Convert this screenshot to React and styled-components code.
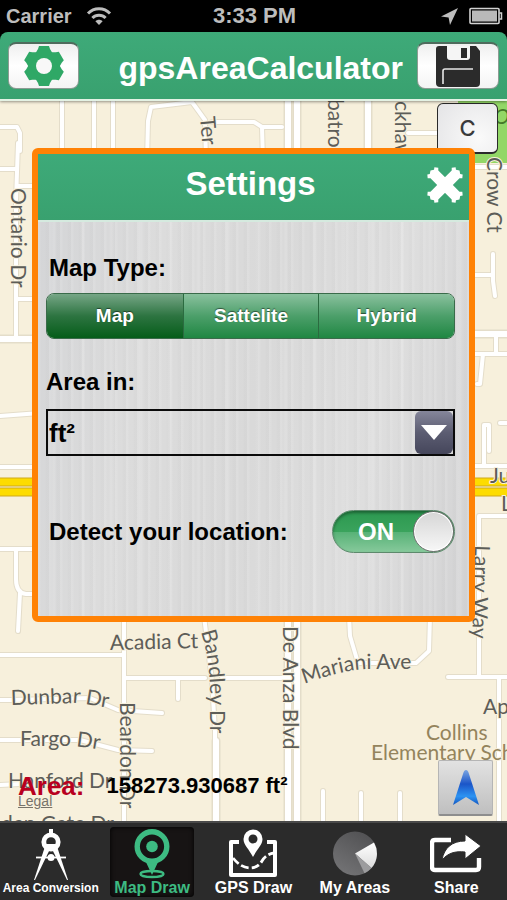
import React, {useState} from 'react';
import styled, {createGlobalStyle, css} from 'styled-components';

const GlobalStyle = createGlobalStyle`
  * {
    box-sizing: border-box;
  }

  body {
    margin: 0;
    background: #000;
    font-family: "Liberation Sans", Arial, sans-serif;
    font-weight: bold;
  }

  button, select, input {
    font: inherit;
  }
`;

/* ---------- icons ---------- */

const WifiIcon = () => (
  <svg width="26" height="20" viewBox="0 0 26 20" fill="none" stroke="#bdbdbd" strokeWidth="3">
    <path d="M2 7.5C8 1.2 18 1.2 24 7.5"/>
    <path d="M6.4 12C10 8.2 16 8.2 19.6 12"/>
    <path d="M9.4 15.2C11.4 13.2 14.6 13.2 16.6 15.2L13 19Z" fill="#bdbdbd" stroke="none"/>
  </svg>
);

const ArrowIcon = () => (
  <svg width="19" height="19" viewBox="0 0 19 19" fill="#bdbdbd">
    <path d="M18 1L10 18L8.6 10.4L1 9.4Z"/>
  </svg>
);

const BatteryIcon = () => (
  <svg width="34" height="18" viewBox="0 0 34 18">
    <rect x="1" y="1.5" width="29" height="15" rx="1" fill="none" stroke="#d2d2d2" strokeWidth="1.6"/>
    <rect x="3" y="3.5" width="25" height="11" fill="#b9b9b9"/>
    <path d="M30.5 6H32.5V12H30.5" fill="none" stroke="#d2d2d2" strokeWidth="1.5"/>
  </svg>
);

const GearIcon = () => (
  <svg width="42" height="42" viewBox="-21 -21 42 42">
    <g fill="#2fa866">
      <circle r="15.5"/>
      {[0, 60, 120, 180, 240, 300].map(a => (
        <path key={a} transform={`rotate(${a})`} d="M-9 -12L-6 -17L-5 -20H5L6 -17L9 -12Z"/>
      ))}
    </g>
    <circle r="8" fill="#f8f8f8"/>
  </svg>
);

const FloppyIcon = () => (
  <svg width="44" height="41" viewBox="0 0 44 41">
    <path d="M3 0H40L44 5V37Q44 41 40 41H4Q0 41 0 37V3Q0 0 3 0Z" fill="#2b2b2b"/>
    <path d="M11 0H34V11Q34 14 31 14H14Q11 14 11 11Z" fill="#f5f5f5"/>
    <rect x="25" y="2" width="6" height="10" fill="#2b2b2b"/>
    <path d="M7 38V25Q7 23 9 23H37" fill="none" stroke="#e6e6e6" strokeWidth="1.6"/>
  </svg>
);

const CloseIcon = () => (
  <svg width="36" height="36" viewBox="-18 -18 36 36" fill="#fff">
    {[45, 135, 225, 315].map(a => (
      <path key={a} transform={`rotate(${a})`} d="M-5.5 0V-15L-7.5 -17L-5 -20L-3 -18.500L0 -20.500L3 -18.500L5 -20L7.5 -17L5.5 -15V0Z"/>
    ))}
  </svg>
);

const LocateIcon = () => (
  <svg width="30" height="38" viewBox="0 0 30 38">
    <defs>
      <linearGradient id="locate" x1="0" y1="0" x2="0" y2="1">
        <stop offset="0" stopColor="#7aa5e2"/>
        <stop offset="0.4" stopColor="#1b55c8"/>
        <stop offset="0.75" stopColor="#2c93f2"/>
        <stop offset="1" stopColor="#1456c0"/>
      </linearGradient>
    </defs>
    <path d="M15 1Q17 1 18 5L28 36L15 28L2 36L12 5Q13 1 15 1Z" fill="url(#locate)"/>
  </svg>
);

const CompassIcon = () => (
  <svg width="36" height="52" viewBox="0 0 36 52">
    <rect x="16" y="1" width="4" height="6" fill="#fff"/>
    <circle cx="18" cy="14" r="7.2" fill="none" stroke="#fff" strokeWidth="4.8"/>
    <path d="M13 16H23L22 19H14Z" fill="#fff"/>
    <path d="M11.5 20L16.5 22L2 52H1Z" fill="#fff"/>
    <path d="M24.5 20L19.5 22L34 52H35Z" fill="#fff"/>
    <path d="M3 29.5H33" stroke="#fff" strokeWidth="1.8"/>
    <circle cx="18" cy="29.5" r="3.5" fill="#fff"/>
  </svg>
);

const PinIcon = () => (
  <svg width="38" height="50" viewBox="0 0 38 50">
    <ellipse cx="19" cy="45" rx="11.5" ry="3" fill="none" stroke="#3dbb82" strokeWidth="2.4"/>
    <path d="M12 31H26L19 46Z" fill="#3dbb82"/>
    <circle cx="19" cy="17.5" r="14.8" fill="#171414" stroke="#3dbb82" strokeWidth="5.4"/>
    <circle cx="19" cy="17.5" r="5.8" fill="#3dbb82"/>
  </svg>
);

const MapPinIcon = () => (
  <svg width="48" height="49" viewBox="0 0 48 49">
    <path d="M10 13H2V46H46V13H38" fill="none" stroke="#fff" strokeWidth="4" strokeLinejoin="round"/>
    <path d="M24 28C20 20 14.500 16 14.500 10A9.500 9.500 0 0 1 33.500 10C33.500 16 28 20 24 28Z" fill="#fff"/>
    <circle cx="24" cy="10" r="4.5" fill="#2b2b2b"/>
    <path d="M4 29Q12 39 21 39Q29 39 33 32Q37 25 45 24" fill="none" stroke="#fff" strokeWidth="2.8" strokeDasharray="8 3"/>
  </svg>
);

const PieIcon = () => (
  <svg width="44" height="45" viewBox="0 0 44 45">
    <defs>
      <linearGradient id="pie" x1="0.8" y1="0" x2="0.2" y2="1">
        <stop offset="0" stopColor="#505052"/>
        <stop offset="1" stopColor="#747476"/>
      </linearGradient>
      <linearGradient id="slice" x1="0" y1="0" x2="0" y2="1">
        <stop offset="0" stopColor="#fff"/>
        <stop offset="1" stopColor="#dcdcdc"/>
      </linearGradient>
    </defs>
    <circle cx="22" cy="22.5" r="22" fill="url(#pie)"/>
    <path d="M22 22.5L41 11.5A22 22 0 0 1 38.5 37Z" fill="url(#slice)"/>
    <path d="M22 22.5L38.5 37A22 22 0 0 1 31.5 42.3Z" fill="#9c9c9e"/>
  </svg>
);

const ShareIcon = () => (
  <svg width="52" height="40" viewBox="0 0 52 40">
    <path d="M21 6H5Q2 6 2 9V33Q2 36 5 36H46Q49 36 49 33V24" fill="none" stroke="#fff" strokeWidth="4.4"/>
    <path d="M12 26C14 14 22 7 35 7V0L51 12L35 25V18C25 17 18 19 12 26Z" fill="#fff" stroke="#2b2b2b" strokeWidth="1"/>
  </svg>
);

/* ---------- map ---------- */

const THIN_ROADS = [
  'M62 95V160', 'M94 95V160', 'M113 95V160',
  'M147 160L148 120L151 106L192 101L205 119L206 160', 'M212 121H254L262 126L263 160', 'M262 126H282',
  'M0 126H17L20 132V150', 'M18 142L16 200V338', 'M0 168H17', 'M17 185H40', 'M17 298H40',
  'M0 415L40 412', 'M0 466H40', 'M0 548H40', 'M16 548V578Q16 592 26 593H40', 'M20 592L18 630',
  'M408 132H440', 'M470 166H507', 'M470 274H493', 'M493 253V280L495 295', 'M496 333V352', 'M470 353H507',
  'M483 353L480 383H477', 'M484 465V424H489V450', 'M470 465H507', 'M500 422H507', 'M479 676V515H507',
  'M448 676H507', 'M499 676V830', 'M124 615V830', 'M0 654H124', 'M124 677H205', 'M178 677V698',
  'M204 615L212 680L215 730V830', 'M222 677H290', 'M349 615L350 635L358 662H416L429 650L430 615',
  'M0 699H12L90 697L118 709L162 712', 'M0 739H80L118 749L152 750', 'M0 784L20 783', 'M323 790V830', 'M361 792V830', 'M400 792V830',
];

const WIDE_ROADS = ['M288 95V830', 'M297 95V830', 'M368 95V160', 'M0 338H40', 'M470 333H507', 'M216 740V830'];

const LABELS = [
  {text: 'Ter', d: 'M200 116L205 176'},
  {text: 'batross', d: 'M328 98V200'},
  {text: 'ckhawk', d: 'M395 100V200'},
  {text: 'Crow Ct', d: 'M487 156V290'},
  {text: 'Ontario Dr', d: 'M11 187V330'},
  {text: 'Ju', d: 'M490 482H530'},
  {text: 'La', d: 'M501 510H540'},
  {text: 'Larry Way', d: 'M475 544L473 600L471 700'},
  {text: 'Acadia Ct', d: 'M110 649L250 646'},
  {text: 'Bandley Dr', d: 'M201 631Q209 655 210 690V790'},
  {text: 'De Anza Blvd', d: 'M283 625V790'},
  {text: 'Mariani Ave', d: 'M304 683Q345 668 370 668H450'},
  {text: 'Dunbar Dr', d: 'M11 704L76 702Q90 703 150 715'},
  {text: 'Fargo Dr', d: 'M20 745H70Q85 745 150 758'},
  {text: 'Hanford Dr', d: 'M8 787H170'},
  {text: 'Beardon Dr', d: 'M120 701V850'},
  {text: 'den Gate Dr', d: 'M1 830H160'},
  {text: 'Ap', d: 'M483 713H540'},
  {text: 'Collins', d: 'M426 739H540', color: '#94845c'},
  {text: 'Elementary School', d: 'M371 759H560', color: '#94845c'},
];

const MapView = () => (
  <MapCanvas viewBox="0 100 507 720" preserveAspectRatio="xMidYMid slice" aria-label="Map">
    <rect x="-500" y="-200" width="1500" height="1400" fill="#f7f0dc"/>
    <path d="M458 95H507V162H458Z" fill="#92d767"/>
    <g fill="none" strokeLinecap="round" strokeLinejoin="round">
      <g stroke="#e4ddca" strokeWidth="6">{THIN_ROADS.map(d => <path key={d} d={d}/>)}</g>
      <g stroke="#e4ddca" strokeWidth="9">{WIDE_ROADS.map(d => <path key={d} d={d}/>)}</g>
      <g stroke="#fff" strokeWidth="4">{THIN_ROADS.map(d => <path key={d} d={d}/>)}</g>
      <g stroke="#fff" strokeWidth="6">{WIDE_ROADS.map(d => <path key={d} d={d}/>)}</g>
    </g>
    <path d="M0 481H507M0 491H507" stroke="#cfa91b" strokeWidth="9"/>
    <path d="M0 481H507M0 491H507" stroke="#fddc00" strokeWidth="7"/>
    <GreenLabel x="494" y="123">Or</GreenLabel>
    {LABELS.map(({text, d, color = '#5d5d58'}, i) => (
      <React.Fragment key={text}>
        <path id={`street-${i}`} d={d} fill="none"/>
        <text fill={color}>
          <textPath href={`#street-${i}`}>{text}</textPath>
        </text>
      </React.Fragment>
    ))}
  </MapCanvas>
);

/* ---------- screen ---------- */

const MAP_TYPES = ['Map', 'Sattelite', 'Hybrid'];

const TABS = [
  {name: 'Area Conversion', Icon: CompassIcon, small: true},
  {name: 'Map Draw', Icon: PinIcon},
  {name: 'GPS Draw', Icon: MapPinIcon},
  {name: 'My Areas', Icon: PieIcon},
  {name: 'Share', Icon: ShareIcon},
];

const Settings = () => {
  const [mapType, setMapType] = useState('Map');
  const [detect, setDetect] = useState(true);

  return (
    <Dialog role="dialog" aria-labelledby="settings-title">
      <DialogHeader>
        <DialogTitle id="settings-title">Settings</DialogTitle>
        <CloseButton aria-label="Close"><CloseIcon/></CloseButton>
      </DialogHeader>
      <DialogBody>
        <FieldLabel as="div" $inset id="map-type">Map Type:</FieldLabel>
        <Segments role="radiogroup" aria-labelledby="map-type">
          {MAP_TYPES.map(type => (
            <Segment key={type} $active={type === mapType}>
              <HiddenInput type="radio" name="mapType" checked={type === mapType} onChange={() => setMapType(type)}/>
              {type}
            </Segment>
          ))}
        </Segments>

        <FieldLabel htmlFor="unit" $spaced>Area in:</FieldLabel>
        <SelectBox>
          <UnitSelect id="unit" defaultValue="ft²">
            <option>ft²</option>
            <option>m²</option>
          </UnitSelect>
          <SelectArrow>
            <svg width="26" height="15" viewBox="0 0 26 15"><path d="M0 0H26L13 15Z" fill="#fff"/></svg>
          </SelectArrow>
        </SelectBox>

        <SwitchRow>
          <FieldLabel htmlFor="detect" $inset>Detect your location:</FieldLabel>
          <Switch>
            <HiddenInput id="detect" type="checkbox" checked={detect} onChange={() => setDetect(!detect)}/>
            <SwitchText>{detect ? 'ON' : 'OFF'}</SwitchText>
            <Knob/>
          </Switch>
        </SwitchRow>
      </DialogBody>
    </Dialog>
  );
};

const App = () => (
  <Screen>
    <GlobalStyle/>
    <StatusBar>
      <Carrier>Carrier <WifiIcon/></Carrier>
      <Clock>3:33 PM</Clock>
      <StatusIcons><ArrowIcon/><BatteryIcon/></StatusIcons>
    </StatusBar>

    <Header>
      <HeaderButton aria-label="Settings"><GearIcon/></HeaderButton>
      <Title>gpsAreaCalculator</Title>
      <HeaderButton $wide aria-label="Save"><FloppyIcon/></HeaderButton>
    </Header>

    <Stage>
      <MapView/>
      <ClearButton>C</ClearButton>
      <Settings/>
      <Legal href="#legal">Legal</Legal>
      <AreaReadout>
        <AreaName>Area:</AreaName>
        <AreaValue>158273.930687 ft²</AreaValue>
      </AreaReadout>
      <LocateButton aria-label="Locate me"><LocateIcon/></LocateButton>
    </Stage>

    <TabBar>
      {TABS.map(({name, Icon, small}) => (
        <Tab key={name} $active={name === 'Map Draw'}>
          <TabIcon><Icon/></TabIcon>
          <TabName $small={small}>{name}</TabName>
        </Tab>
      ))}
    </TabBar>
  </Screen>
);

const Screen = styled.div`
  display: flex;
  flex-direction: column;
  min-height: 100vh;
`;

const StatusBar = styled.div`
  display: grid;
  grid-template-columns: 1fr auto 1fr;
  align-items: center;
  height: 32px;
  padding: 0 4px 0 6px;
  color: #bdbdbd;
  font-size: 20px;
`;

const Carrier = styled.div`
  display: flex;
  align-items: center;
  gap: 14px;
`;

const Clock = styled.time`
  font-size: 22px;
`;

const StatusIcons = styled.div`
  display: flex;
  justify-content: flex-end;
  align-items: center;
  gap: 10px;
`;

const greenBar = css`
  background: linear-gradient(#3eaa79, #39a16f);
  color: #fff;
`;

const Header = styled.header`
  ${greenBar}
  display: flex;
  align-items: center;
  position: relative;
  height: 69px;
  padding: 0 8px;
  border-bottom: 2px solid #e4f2e4;
  border-radius: 8px 8px 0 0;
  box-shadow: 0 1px 3px rgba(0, 0, 0, 0.4);
  z-index: 1;
`;

const HeaderButton = styled.button`
  display: flex;
  justify-content: center;
  align-items: center;
  width: ${props => props.$wide ? '82px' : '71px'};
  height: 47px;
  padding: 0;
  border: 1px solid #8d9c94;
  border-top: 2px solid #4f6b5d;
  border-radius: 8px;
  background: linear-gradient(#efefef, #fff 50%, #f4f4f4);
`;

const Title = styled.h1`
  flex: 1;
  margin: 0;
  padding: 4px 14px 0 0;
  font-size: 32px;
  line-height: 40px;
  text-align: right;
`;

const Stage = styled.main`
  flex: 1;
  position: relative;
  padding: 47px 32px 198px;
  overflow: hidden;
`;

const MapCanvas = styled.svg`
  position: absolute;
  inset: 0;
  width: 100%;
  height: 100%;
  font-family: Lato, sans-serif;
  font-size: 21px;
  font-weight: normal;

  text {
    stroke: #f7f0dc;
    stroke-width: 2px;
    paint-order: stroke;
  }
`;

const GreenLabel = styled.text`
  && {
    fill: #457a2a;
    stroke: none;
    font-style: italic;
  }
`;

const ClearButton = styled.button`
  position: absolute;
  top: 2px;
  right: 9px;
  width: 61px;
  height: 51px;
  padding: 0;
  border: 1px solid #2a2a2a;
  border-bottom-width: 2px;
  border-radius: 6px;
  background: radial-gradient(circle at 70% 70%, #fafafa, #e4e4e6);
  color: #3a3a3a;
  font-family: Inter, sans-serif;
  font-size: 22px;
  font-weight: 500;
`;

const Dialog = styled.section`
  position: relative;
  border: 6px solid #ff8205;
  border-radius: 6px;
  background: #d9d9d9;
`;

const DialogHeader = styled.div`
  ${greenBar}
  position: relative;
  height: 68px;
  border-bottom: 2px solid #d5eadf;
`;

const DialogTitle = styled.h2`
  margin: 0;
  padding: 10px 6px 0 0;
  font-size: 33px;
  line-height: 40px;
  text-align: center;
`;

const CloseButton = styled.button`
  position: absolute;
  top: 13px;
  right: 6px;
  display: flex;
  padding: 0;
  border: 0;
  background: none;
`;

const DialogBody = styled.div`
  padding: 32px 14px 63px 8px;
  background:
    repeating-linear-gradient(90deg, rgba(255, 255, 255, 0.1) 0 2px, transparent 3px 7px, rgba(0, 0, 0, 0.01) 8px 11px),
    repeating-linear-gradient(90deg, transparent 0 13px, rgba(255, 255, 255, 0.12) 15px 17px, transparent 18px 29px),
    linear-gradient(100deg, #d4d5d7, #dcdcdc 25%, #d9d9d9 50%, #dedede 75%, #d3d3d4);
`;

const FieldLabel = styled.label`
  display: block;
  margin-top: ${props => props.$spaced ? '29px' : '0'};
  padding-left: ${props => props.$inset ? '3px' : '0'};
  color: #000;
  font-size: 24px;
  line-height: 28px;
`;

const HiddenInput = styled.input`
  position: absolute;
  opacity: 0;
`;

const Segments = styled.div`
  display: grid;
  grid-template-columns: repeat(3, 1fr);
  height: 46px;
  margin-top: 11px;
  border: 1px solid #3a6b4a;
  border-radius: 8px;
  overflow: hidden;
`;

const Segment = styled.label`
  display: flex;
  justify-content: center;
  align-items: center;
  background: ${props => props.$active
    ? 'linear-gradient(#76a686, #2d7441 50%, #055d19)'
    : 'linear-gradient(#8ac19e, #4c9f6a 50%, #1f8742)'};
  color: #fff;
  font-size: 19px;
  text-shadow: 0 -1px 1px rgba(0, 0, 0, 0.5);

  & + & {
    border-left: 1px solid #2b6b40;
  }
`;

const SelectBox = styled.div`
  display: flex;
  position: relative;
  height: 47px;
  margin-top: 13px;
  border: 2px solid #0a0a0a;
`;

const UnitSelect = styled.select`
  flex: 1;
  appearance: none;
  padding: 0 1px;
  border: 0;
  background: none;
  color: #000;
  font-size: 26px;
`;

const SelectArrow = styled.span`
  position: absolute;
  top: 0;
  right: 0;
  display: flex;
  justify-content: center;
  align-items: center;
  width: 38px;
  height: 43px;
  border-radius: 6px;
  background: linear-gradient(#85869a, #5c5d72 50%, #45465b);
  pointer-events: none;
`;

const SwitchRow = styled.div`
  display: flex;
  justify-content: space-between;
  align-items: center;
  margin-top: 54px;
`;

const Switch = styled.label`
  display: flex;
  justify-content: space-between;
  align-items: center;
  position: relative;
  width: 123px;
  height: 43px;
  border: 1px solid #5d8a6c;
  border-radius: 22px;
  background: linear-gradient(#2c9850, #3aa35c 50%, #58b277 52%, #86c99b);
  box-shadow: inset 0 2px 3px rgba(0, 0, 0, 0.35);
`;

const SwitchText = styled.span`
  flex: 1;
  padding-left: 6px;
  color: #fff;
  font-size: 24px;
  text-align: center;
`;

const Knob = styled.span`
  width: 41px;
  height: 41px;
  border: 1px solid #707070;
  border-radius: 50%;
  background: linear-gradient(#d6d6d6, #f7f7f7);
  box-shadow: inset 0 0 0 1px #fff;
`;

const Legal = styled.a`
  position: absolute;
  left: 18px;
  bottom: 12px;
  color: #77736a;
  font-size: 14px;
  font-weight: normal;
  line-height: 16px;
`;

const AreaReadout = styled.div`
  display: flex;
  align-items: center;
  position: absolute;
  left: 18px;
  bottom: 20px;
  gap: 22px;
  line-height: 30px;
`;

const AreaName = styled.span`
  color: #b8001f;
  font-size: 26px;
`;

const AreaValue = styled.output`
  color: #000;
  font-size: 22px;
`;

const LocateButton = styled.button`
  display: flex;
  justify-content: center;
  align-items: center;
  position: absolute;
  right: 14px;
  bottom: 5px;
  width: 55px;
  height: 56px;
  padding: 0;
  border: 1px solid #b5b5b5;
  border-bottom: 2px solid #8e8e8e;
  border-radius: 2px;
  background: linear-gradient(#e2e2e2, #bfbfbf);
`;

const TabBar = styled.nav`
  display: grid;
  grid-template-columns: repeat(5, minmax(0, 1fr));
  height: 79px;
  padding-top: 4px;
  border-top: 2px solid #4a4a4a;
  background: #2b2b2b;
`;

const Tab = styled.button`
  display: flex;
  flex-direction: column;
  align-items: center;
  height: 70px;
  margin: 0 9px;
  padding: 0;
  border: 0;
  border-radius: 4px;
  background: ${props => props.$active ? '#171414' : 'none'};
  box-shadow: ${props => props.$active ? 'inset 0 0 5px #000' : 'none'};
  color: ${props => props.$active ? '#3dbb82' : '#fff'};
  white-space: nowrap;
`;

const TabIcon = styled.span`
  display: flex;
  justify-content: center;
  align-items: center;
  height: 53px;
`;

const TabName = styled.span`
  font-size: ${props => props.$small ? '12px' : '16px'};
  line-height: 16px;
`;

export default App;
